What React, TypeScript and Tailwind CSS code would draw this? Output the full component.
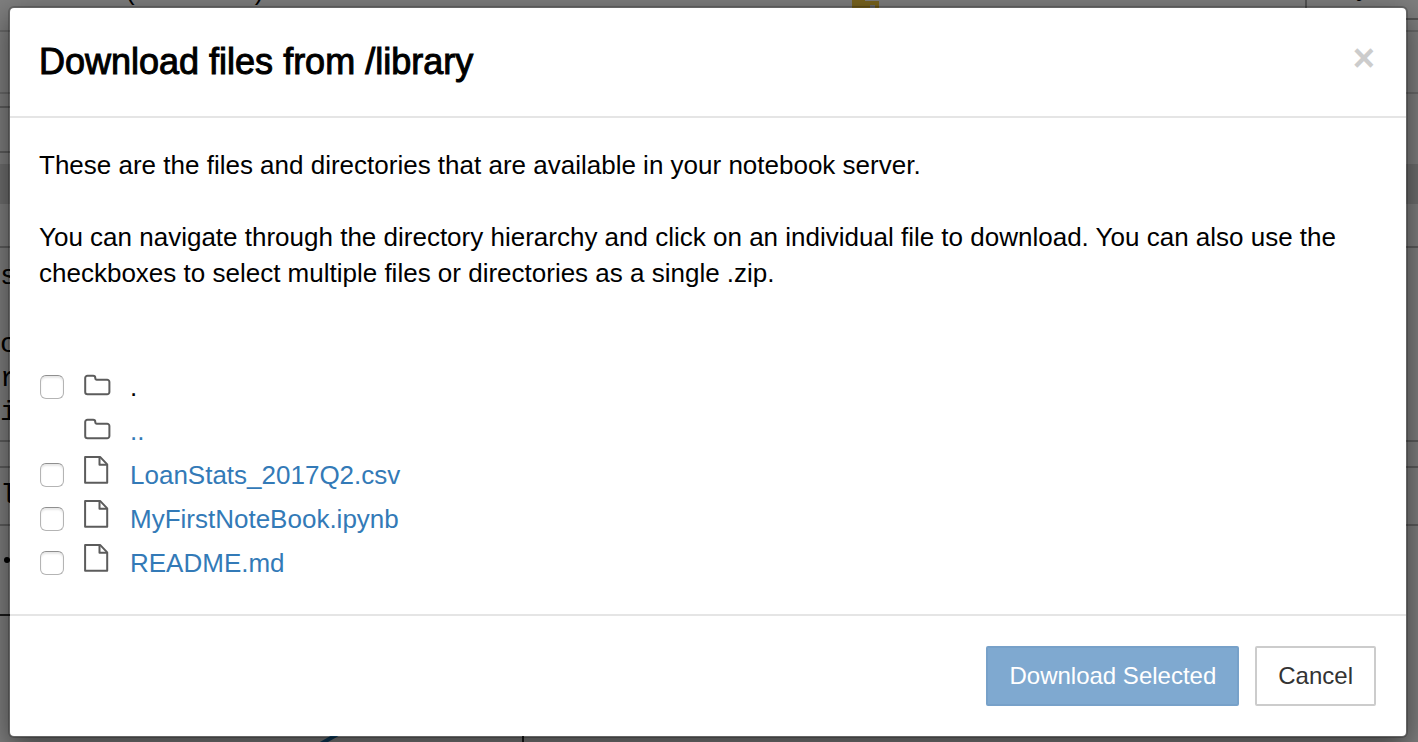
import React from "react";

type Entry = { name: string; kind: "folder" | "file"; selectable: boolean; link: boolean };

const entries: Entry[] = [
  { name: ".", kind: "folder", selectable: true, link: false },
  { name: "..", kind: "folder", selectable: false, link: true },
  { name: "LoanStats_2017Q2.csv", kind: "file", selectable: true, link: true },
  { name: "MyFirstNoteBook.ipynb", kind: "file", selectable: true, link: true },
  { name: "README.md", kind: "file", selectable: true, link: true },
];

function FolderIcon() {
  return (
    <svg width="28" height="28" viewBox="0 0 28 28" fill="none" stroke="#5c5c5c" strokeWidth="2" aria-hidden="true">
      <path d="M1.2 20V6a2.3 2.3 0 0 1 2.3-2.3h5.6a2.2 2.2 0 0 1 2.2 2.2v.4a1.4 1.4 0 0 0 1.4 1.4h10.4a2.3 2.3 0 0 1 2.3 2.3v10a2.3 2.3 0 0 1-2.3 2.3H3.5A2.3 2.3 0 0 1 1.2 20z" />
    </svg>
  );
}

function FileIcon() {
  return (
    <svg width="28" height="28" viewBox="0 0 28 28" fill="none" stroke="#5c5c5c" strokeWidth="2" strokeLinejoin="round" aria-hidden="true">
      <path d="M1.1 1.1h15.2l6.9 7.3v18.4H1.1z" />
      <path d="M15.5 1.3v7.4h7.5" />
    </svg>
  );
}

function NotebookPage() {
  return (
    <div aria-hidden="true" className="flex h-full flex-col overflow-hidden bg-white text-black">
      <div className="flex h-8 items-start border-b-2 border-[#d5d5d5]">
        <span className="-mt-6 ml-[126px] text-[26px] leading-[30px]">(autosaved)</span>
        <svg className="ml-auto mr-[426px]" width="27" height="10" viewBox="0 0 27 10">
          <path d="M0 0h13v1h14v9H0z" fill="#f3c83c" />
          <path d="M18 5h5v5h-5z" fill="#ddd" />
        </svg>
        <div className="h-5 w-[113px] border-b-2 border-l-2 border-[#aaa]">
          <span className="-mt-7 ml-8 block text-[26px] leading-[30px]">Py</span>
        </div>
      </div>
      <div className="h-[62px] border-b-2 border-[#d5d5d5]" />
      <div className="h-[70px] pt-3">
        <div className="h-[47px] w-5 border-y-2 border-[#bbb]" />
      </div>
      <div className="h-10 bg-[#dedede]" />
      <div className="h-11 border-b-2 border-[#bbb]" />
      <pre className="h-[194px] border-b-2 border-[#bbb] pt-3 font-['Liberation_Mono',monospace] text-[28px] leading-[34px]">
        {"s\n\nc\nr\ni"}
      </pre>
      <div className="h-[26px] border-b-2 border-[#bbb]" />
      <pre className="h-[58px] border-b-2 border-[#bbb] pt-[11px] font-['Liberation_Mono',monospace] text-[28px] leading-[34px]">
        l
      </pre>
      <div className="h-[88px] pl-1 pt-[31px]">
        <div className="size-[6px] rounded-full bg-black" />
      </div>
      <div className="h-[128px] w-[524px] border-r-2 border-t-2 border-[#333]">
        <svg width="522" height="126" viewBox="0 0 522 126" fill="none" stroke="#1f77b4" strokeWidth="4">
          <path d="M310 134L338 118" />
        </svg>
      </div>
    </div>
  );
}

function FileRow({ entry }: { entry: Entry }) {
  return (
    <li className="flex h-11 items-start">
      <span className="flex w-[45px] pl-px pt-[10px]">
        {entry.selectable && (
          <input
            type="checkbox"
            aria-label={`Select ${entry.name}`}
            className="size-6 appearance-none rounded-md border border-[#b4b4b4] border-t-[#8f8f8f] bg-white shadow-[inset_0_2px_2px_#e8e8e8] checked:bg-[#337ab7]"
          />
        )}
      </span>
      <span className={entry.kind === "folder" ? "w-[46px] pt-[7px]" : "w-[46px] pt-[3px]"}>
        {entry.kind === "folder" ? <FolderIcon /> : <FileIcon />}
      </span>
      {entry.link ? (
        <a href="#" className="pt-1 text-[#337ab7] hover:underline">
          {entry.name}
        </a>
      ) : (
        <span className="pt-1">{entry.name}</span>
      )}
    </li>
  );
}

export default function App() {
  return (
    <div className="relative h-screen overflow-hidden font-['Liberation_Sans',Arial,sans-serif]">
      <NotebookPage />
      <div className="absolute inset-0 overflow-auto bg-black/50 pl-2 pr-[10px] pt-[6px]">
        <div
          role="dialog"
          aria-labelledby="dialog-title"
          className="rounded-md border-2 border-black/20 bg-white bg-clip-padding text-[26px] leading-9 text-black shadow-[0_10px_30px_rgba(0,0,0,0.5)]"
        >
          <header className="flex items-start justify-between border-b-2 border-[#e5e5e5] px-[29px] pb-[30px] pt-[30px]">
            <h4 id="dialog-title" className="text-[36px] font-medium leading-[48px] [-webkit-text-stroke:1px_black]">
              Download files from /library
            </h4>
            <button type="button" aria-label="Close" className="px-0.5 text-[38px] font-bold leading-10 text-[#ccc]">
              ×
            </button>
          </header>
          <div className="px-[29px] py-[29px]">
            <p>These are the files and directories that are available in your notebook server.</p>
            <p className="mt-9">
              You can navigate through the directory hierarchy and click on an individual file to download. You can also
              use the checkboxes to select multiple files or directories as a single .zip.
            </p>
            <ul className="mt-[74px]">
              {entries.map((entry) => (
                <FileRow key={entry.name} entry={entry} />
              ))}
            </ul>
          </div>
          <footer className="flex justify-end gap-4 border-t-2 border-[#e5e5e5] p-[30px] text-[24px]">
            <button
              type="button"
              className="h-[60px] rounded-xs border-2 border-[#77a1c9] bg-[#7fa9d0] px-[21px] text-white"
            >
              Download Selected
            </button>
            <button type="button" className="h-[60px] rounded-xs border-2 border-[#ccc] bg-white px-[21px] text-[#333]">
              Cancel
            </button>
          </footer>
        </div>
      </div>
    </div>
  );
}
